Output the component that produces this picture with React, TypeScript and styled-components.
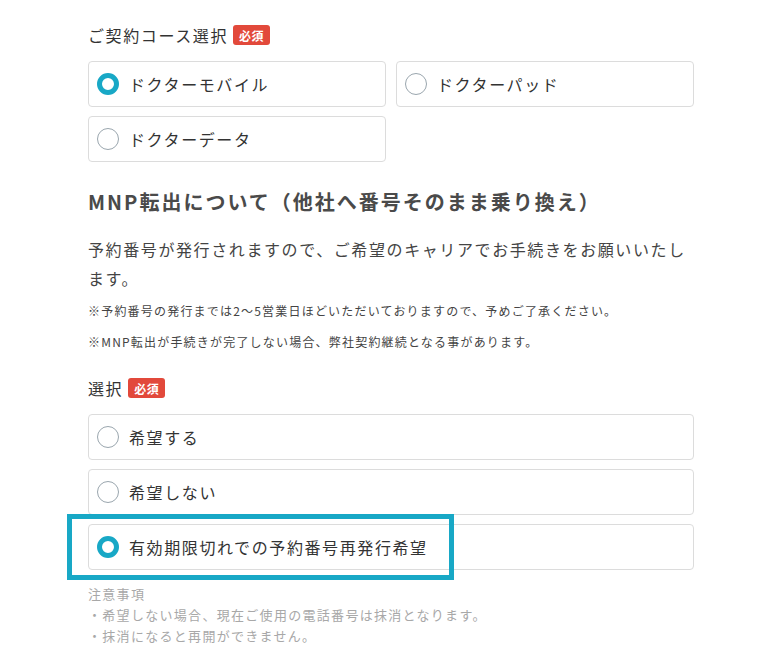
import React from "react";
import styled, { createGlobalStyle } from "styled-components";

const Global = createGlobalStyle`
  html, body { margin: 0; padding: 0; background: #fff; }
  body {
    font-family: "Noto Sans CJK JP", "Noto Sans", sans-serif;
    color: #333;
  }
`;

const Page = styled.div`
  width: 606px;
  padding: 22px 0 40px 88px;
`;

const LabelRow = styled.div`
  display: flex;
  align-items: center;
  gap: 5px;
  height: 26px;
  font-size: 16px;
  letter-spacing: 0.1em;
  color: #333;
`;

const Badge = styled.span`
  display: inline-flex;
  align-items: center;
  justify-content: center;
  height: 20px;
  padding: 0 6px;
  border-radius: 3px;
  background: #e2493b;
  color: #fff;
  font-size: 12px;
  font-weight: 700;
  letter-spacing: 0.05em;
`;

const CourseGrid = styled.div`
  display: grid;
  grid-template-columns: 1fr 1fr;
  column-gap: 10px;
  row-gap: 9px;
  margin-top: 13px;
`;

const OptionList = styled.div`
  display: flex;
  flex-direction: column;
  gap: 9px;
  margin-top: 13px;
`;

const Card = styled.label`
  position: relative;
  box-sizing: border-box;
  display: flex;
  align-items: center;
  gap: 10px;
  height: 46px;
  padding-left: 8px;
  padding-bottom: 1px;
  border: 1px solid #dcdcdc;
  border-radius: 4px;
  background: #fff;
  font-size: 16px;
  letter-spacing: 0.1em;
  color: #333;
`;

const Radio = styled.span<{ $checked?: boolean }>`
  box-sizing: border-box;
  flex: none;
  width: 22px;
  height: 22px;
  border-radius: 50%;
  background: #fff;
  border: ${(p) => (p.$checked ? "5px solid #18a8c6" : "1px solid #9aa6ae")};
`;

const Heading = styled.h2`
  margin: 25px 0 0;
  font-size: 20px;
  line-height: 30px;
  font-weight: 700;
  letter-spacing: 0.1em;
  color: #4a4a4a;
`;

const Lead = styled.p`
  margin: 18px 0 0;
  font-size: 16px;
  line-height: 29px;
  letter-spacing: 0.1em;
  color: #444;
`;

const Note = styled.p<{ $gap: number }>`
  margin: ${(p) => p.$gap}px 0 0;
  font-size: 12px;
  line-height: 20px;
  letter-spacing: 0.1em;
  color: #444;
`;

const SectionLabel = styled(LabelRow)`
  margin-top: 23px;
`;

const Highlight = styled.div`
  position: absolute;
  left: -22px;
  top: -11px;
  width: 387px;
  height: 66px;
  box-sizing: border-box;
  border: 5px solid #18a8c6;
  pointer-events: none;
`;

const Caution = styled.div`
  margin-top: 13px;
  font-size: 13px;
  line-height: 21px;
  letter-spacing: 0.1em;
  color: #a8a8a8;
`;

const courses = [
  { label: "ドクターモバイル", checked: true },
  { label: "ドクターパッド", checked: false },
  { label: "ドクターデータ", checked: false },
];

const choices = [
  { label: "希望する", checked: false, highlight: false },
  { label: "希望しない", checked: false, highlight: false },
  { label: "有効期限切れでの予約番号再発行希望", checked: true, highlight: true },
];

export default function App() {
  return (
    <>
      <Global />
      <Page>
        <LabelRow>
          ご契約コース選択<Badge>必須</Badge>
        </LabelRow>
        <CourseGrid>
          {courses.map((c) => (
            <Card key={c.label}>
              <Radio $checked={c.checked} />
              {c.label}
            </Card>
          ))}
        </CourseGrid>

        <Heading>MNP転出について（他社へ番号そのまま乗り換え）</Heading>
        <Lead>
          予約番号が発行されますので、ご希望のキャリアでお手続きをお願いいたします。
        </Lead>
        <Note $gap={8}>
          ※予約番号の発行までは2〜5営業日ほどいただいておりますので、予めご了承ください。
        </Note>
        <Note $gap={11}>
          ※MNP転出が手続きが完了しない場合、弊社契約継続となる事があります。
        </Note>

        <SectionLabel>
          選択<Badge>必須</Badge>
        </SectionLabel>
        <OptionList>
          {choices.map((c) => (
            <Card key={c.label}>
              <Radio $checked={c.checked} />
              {c.label}
              {c.highlight && <Highlight />}
            </Card>
          ))}
        </OptionList>

        <Caution>
          注意事項
          <br />
          ・希望しない場合、現在ご使用の電話番号は抹消となります。
          <br />
          ・抹消になると再開ができません。
        </Caution>
      </Page>
    </>
  );
}
